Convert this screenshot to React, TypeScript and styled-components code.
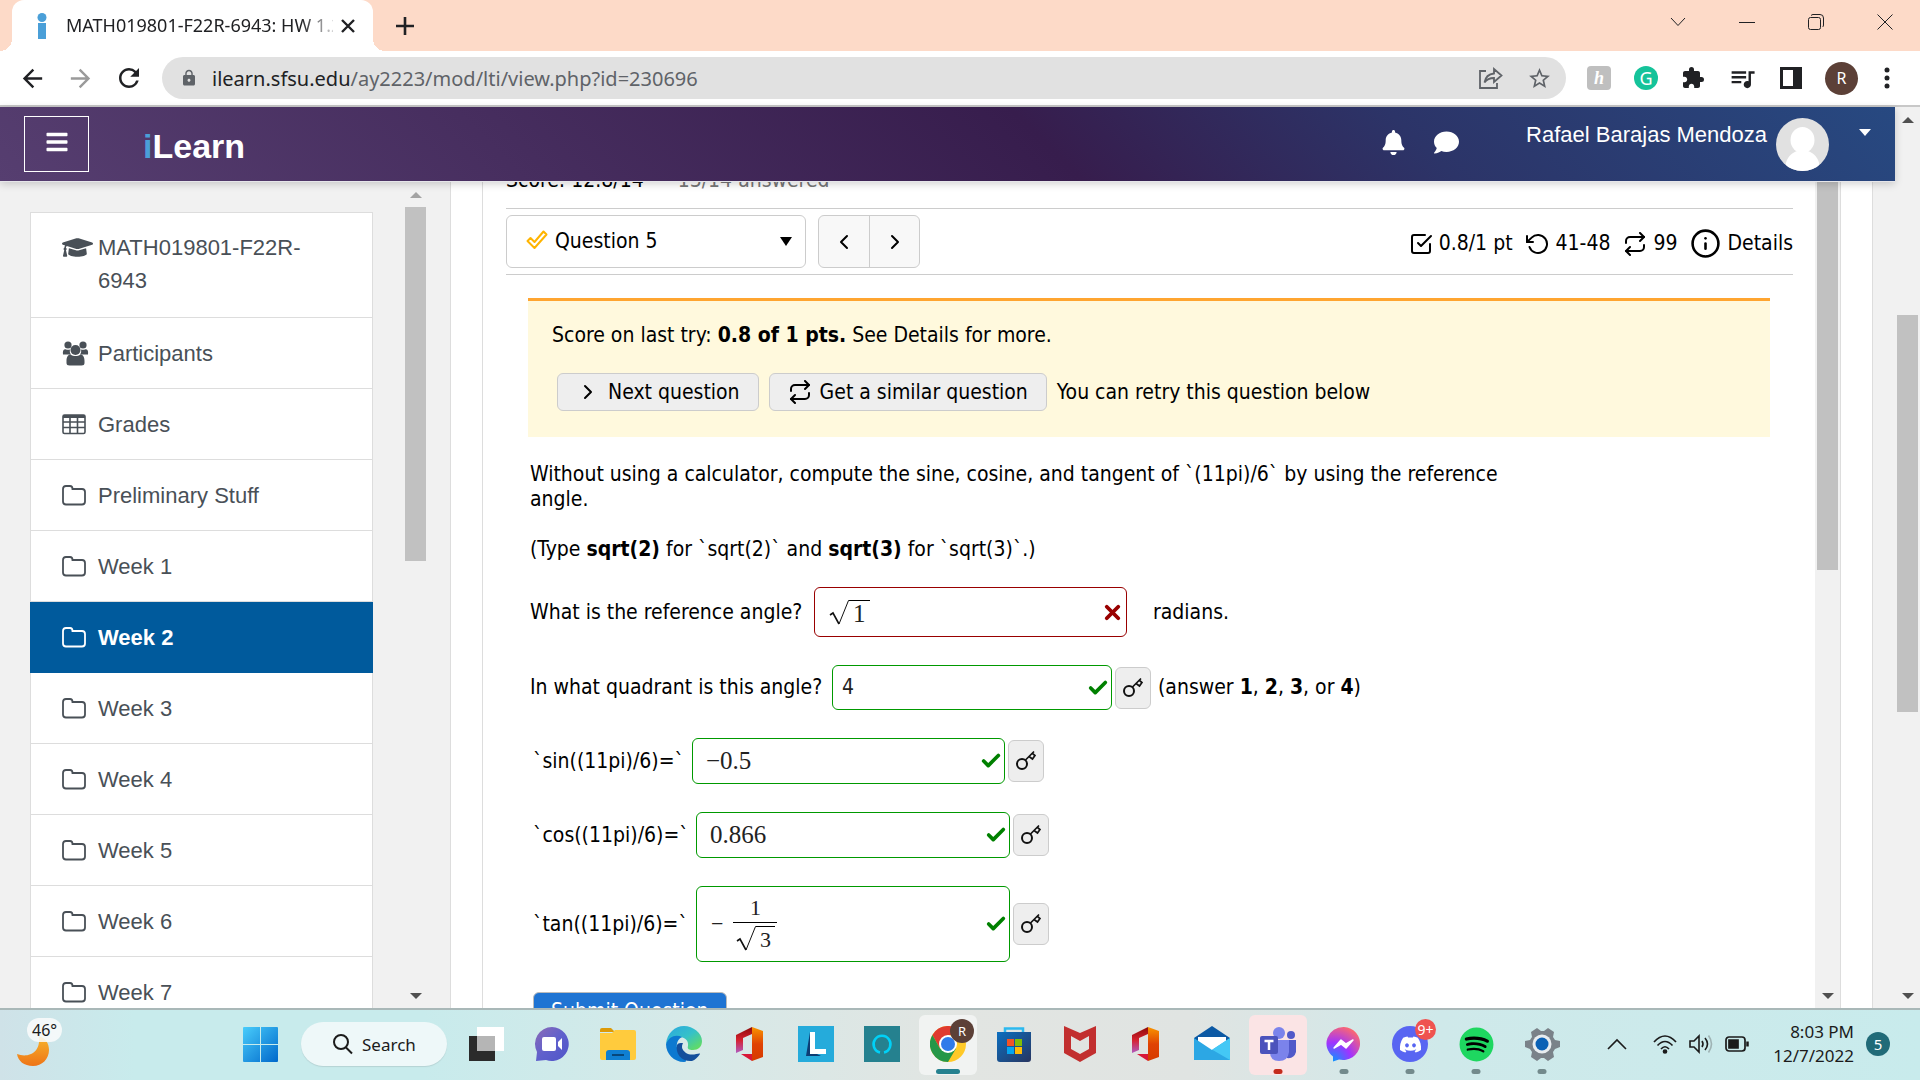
import React from "react";
import styled, { createGlobalStyle } from "styled-components";
import { FaBars, FaBell, FaComment, FaDiscord, FaGraduationCap, FaSpotify } from "react-icons/fa";
import { FiCheck, FiCheckSquare, FiChevronLeft, FiChevronRight, FiInfo, FiRepeat, FiRotateCcw, FiX } from "react-icons/fi";
import { MdArrowBack, MdArrowForward, MdExtension, MdLock, MdQueueMusic, MdRefresh, MdStarBorder } from "react-icons/md";

const ui = `"Noto Sans", "Open Sans", sans-serif`;
const course = `"DejaVu Sans Condensed", "Noto Sans", sans-serif`;
const arial = `"Liberation Sans", Arial, sans-serif`;
const serif = `"Liberation Serif", "Times New Roman", serif`;

const Global = createGlobalStyle`
  *, *::before, *::after { box-sizing: border-box; }
  body { margin: 0; background: #fff; color: #000; font: 20px/25px ${ui}; overflow: hidden; }
  button, input, select { font: inherit; color: inherit; margin: 0; }
  button { cursor: pointer; padding: 0; border: 0; background: none; }
  a { color: inherit; text-decoration: none; }
  svg { display: block; flex: none; }
  ul { list-style: none; margin: 0; padding: 0; }
  p { margin: 0; }
`;

const Screen = styled.div`
  display: flex;
  flex-direction: column;
  height: 100vh;
`;

/* ---------- browser chrome ---------- */

const TabStrip = styled.div`
  display: flex;
  align-items: center;
  height: 51px;
  padding: 0 27px 0 12px;
  background: #fddac8;
  color: #202124;
`;

const Tab = styled.div`
  position: relative;
  display: flex;
  align-items: center;
  align-self: stretch;
  width: 361px;
  padding: 0 18px 0 24px;
  background: #fff;
  border-radius: 12px 12px 0 0;
  font-size: 18px;
  &::before, &::after {
    content: "";
    position: absolute;
    bottom: 0;
    width: 12px;
    height: 12px;
  }
  &::before { left: -12px; background: radial-gradient(circle at 0 0, transparent 12px, #fff 12px); }
  &::after { right: -12px; background: radial-gradient(circle at 100% 0, transparent 12px, #fff 12px); }
`;

const TabTitle = styled.span`
  flex: 1;
  min-width: 0;
  margin: 0 8px 0 18px;
  overflow: hidden;
  white-space: nowrap;
  mask-image: linear-gradient(90deg, #000 88%, rgba(0, 0, 0, 0.2) 100%);
`;

const IconButton = styled.button<{ $dim?: boolean }>`
  display: flex;
  align-items: center;
  justify-content: center;
  color: ${(p) => (p.$dim ? "#9a9a9a" : "#202124")};
`;

const NewTab = styled(IconButton)`
  margin-left: 22px;
`;

const WindowControls = styled.div`
  display: flex;
  gap: 53px;
  margin: 0 0 8px auto;
`;

const Toolbar = styled.div`
  display: flex;
  align-items: center;
  height: 56px;
  padding: 0 30px 0 18px;
  border-bottom: 2px solid #c8c8c8;
`;

const NavButtons = styled.div`
  display: flex;
  gap: 19px;
  width: 144px;
`;

const AddressBar = styled.div`
  display: flex;
  align-items: center;
  flex: 1;
  height: 42px;
  padding: 0 14px 0 18px;
  border-radius: 21px;
  background: #e1e1e1;
  color: #5f6368;
`;

const Url = styled.span`
  flex: 1;
  margin-left: 14px;
  color: #5f6368;
  b { color: #202124; font-weight: 400; }
`;

const AddressActions = styled.div`
  display: flex;
  align-items: center;
  gap: 24px;
`;

const Extensions = styled.div`
  display: flex;
  align-items: center;
  gap: 23px;
  margin-left: 21px;
`;

const Profile = styled.button`
  margin: 0 3px 0 0;
`;

const Honey = styled.span`
  display: grid;
  place-items: center;
  width: 24px;
  height: 24px;
  border-radius: 4px;
  background: #bfbfbf;
  color: #fff;
  font: italic bold 18px/24px ${serif};
`;

const Round = styled.span<{ $size: number; $bg: string; $font: number }>`
  display: grid;
  place-items: center;
  width: ${(p) => p.$size}px;
  height: ${(p) => p.$size}px;
  border-radius: 50%;
  background: ${(p) => p.$bg};
  color: #fff;
  font-size: ${(p) => p.$font}px;
  line-height: 1;
`;

/* ---------- site frame ---------- */

const Viewport = styled.div`
  display: flex;
  flex: 1;
  min-height: 0;
`;

const Site = styled.div`
  display: flex;
  flex-direction: column;
  flex: 1;
  min-width: 0;
`;

const SiteHeader = styled.header`
  position: relative;
  z-index: 1;
  display: flex;
  align-items: center;
  height: 75px;
  flex: none;
  padding: 0 24px;
  border-bottom: 1px solid #e6e6ea;
  background: linear-gradient(45deg, #563e70 0%, #371d4d 55%, #2c3468 74%, #274981 100%);
  box-shadow: 0 2px 8px rgba(0, 0, 0, 0.18);
  color: #fff;
  font: 22px/33px ${arial};
`;

const MenuButton = styled.button`
  display: grid;
  place-items: center;
  width: 65px;
  height: 56px;
  padding-bottom: 4px;
  border: 1px solid #fff;
`;

const Logo = styled.a`
  margin: 3px 0 0 54px;
  font: bold 34px/40px "Liberation Sans Narrow", "Arial Narrow", ${arial};
  span { color: #4a9fd8; }
`;

const HeaderIcons = styled.div`
  display: flex;
  gap: 28px;
  align-items: center;
  margin: 0 67px 4px auto;
`;

const UserName = styled.a`
  padding-bottom: 20px;
  margin-right: 9px;
`;

const Triangle = styled.i<{ $up?: boolean; $color?: string }>`
  width: 0;
  height: 0;
  border: 6px solid transparent;
  border-${(p) => (p.$up ? "bottom" : "top")}-color: ${(p) => p.$color || "#505050"};
  border-${(p) => (p.$up ? "top" : "bottom")}-width: 0;
`;

const UserMenu = styled.button`
  margin: 0 0 24px 30px;
`;

const Track = styled.div`
  display: flex;
  flex-direction: column;
  flex: none;
  width: 25px;
  padding: 0 2px;
  background: #f1f1f1;
`;

const ArrowBox = styled.div`
  display: grid;
  place-items: center;
  height: 25px;
  flex: none;
`;

const Stretch = styled.div<{ $grow: number; $thumb?: boolean }>`
  flex: ${(p) => p.$grow} 0 0;
  background: ${(p) => (p.$thumb ? "#c1c1c1" : "transparent")};
`;

type ScrollbarProps = { before: number; thumb: number; after: number; noTop?: boolean; dimTop?: boolean };
const Scrollbar = ({ before, thumb, after, noTop, dimTop }: ScrollbarProps) => (
  <Track aria-hidden>
    {!noTop && <ArrowBox><Triangle $up $color={dimTop ? "#a3a3a3" : "#505050"} /></ArrowBox>}
    <Stretch $grow={before} />
    <Stretch $grow={thumb} $thumb />
    <Stretch $grow={after} />
    <ArrowBox><Triangle /></ArrowBox>
  </Track>
);

const Body = styled.div`
  display: flex;
  flex: 1;
  min-height: 0;
  overflow: hidden;
  background: #f1f1f1;
`;

/* ---------- course navigation ---------- */

const Sidebar = styled.nav`
  display: flex;
  flex: none;
  gap: 30px;
  width: 451px;
  padding: 0 22px 0 30px;
  border-right: 1px solid #ddd;
`;

const NavList = styled.ul`
  flex: 1;
  margin-top: 30px;
  border: 1px solid #ddd;
  border-bottom: 0;
  background: #fff;
  font: 22px/33px ${arial};
  color: #495057;
`;

const NavLink = styled.a<{ $active?: boolean }>`
  display: flex;
  margin: 0 -1px;
  padding: 19px 31px 18px;
  border: solid #ddd;
  border-width: 0 1px 1px;
  ${(p) => p.$active && `background: #005a9c; border-color: #005a9c; color: #fff; font-weight: bold;`}
  li:first-child > & { padding: 18px 31px 20px; }
`;

const NavIcon = styled.span`
  display: flex;
  align-items: center;
  width: 36px;
  height: 33px;
  flex: none;
`;

/* ---------- assignment ---------- */

const Page = styled.main`
  display: flex;
  flex: 1;
  min-width: 0;
  margin-right: 22px;
  padding: 0 31px;
  border-right: 1px solid #ddd;
  background: #fff;
  font: 21px/25px ${course};
`;

const Frame = styled.div`
  display: flex;
  flex: 1;
  min-width: 0;
  border: solid #ddd;
  border-width: 0 1px;
`;

const Assignment = styled.div`
  flex: 1;
  min-width: 0;
  padding: 0 22px 0 23px;
`;

const ScoreLine = styled.div`
  display: flex;
  gap: 34px;
  margin-top: -14px;
  padding-bottom: 15px;
  span { color: #777; }
`;

const QuestionBar = styled.div`
  display: flex;
  align-items: center;
  height: 67px;
  border: solid #ccc;
  border-width: 1px 0;
`;

const Picker = styled.label`
  position: relative;
  width: 300px;
  svg { position: absolute; left: 20px; top: 15px; }
  i { position: absolute; right: 14px; top: 22px; border-width: 9px 6px 0; }
`;

const PickerSelect = styled.select`
  display: block;
  width: 100%;
  height: 53px;
  padding: 0 40px 0 48px;
  border: 1px solid #ccc;
  border-radius: 6px;
  background: #fff;
  appearance: none;
`;

const Pager = styled.div`
  display: flex;
  margin-left: 12px;
  border: 1px solid #ccc;
  border-radius: 6px;
  background: #f8f8f8;
  button { display: grid; place-items: center; width: 50px; height: 51px; }
  button + button { border-left: 1px solid #ccc; }
`;

const Stats = styled.div`
  display: flex;
  align-items: center;
  gap: 13px;
  margin-left: auto;
  padding-top: 4px;
`;

const Stat = styled.span`
  display: flex;
  align-items: center;
  gap: 6px;
`;

const Notice = styled.section`
  margin: 23px 23px 0 22px;
  height: 139px;
  padding: 22px 24px;
  border-top: 3px solid #ffa530;
  background: #fff9dd;
`;

const NoticeActions = styled.div`
  display: flex;
  align-items: center;
  gap: 10px;
  margin: 25px 0 0 5px;
`;

const GreyButton = styled.button`
  display: flex;
  align-items: center;
  justify-content: center;
  gap: 8px;
  height: 38px;
  padding: 0 18px;
  border: 1px solid #ccc;
  border-radius: 6px;
  background: #eee;
`;

const KeyButton = styled(GreyButton)`
  width: 36px;
  height: 42px;
  margin-left: 3px;
  padding: 0;
`;

const Question = styled.form`
  max-width: 1130px;
  padding: 25px 24px 0;
`;

const Paragraph = styled.p`
  max-width: 1020px;
  margin-bottom: 25px;
`;

const Row = styled.div<{ $gap: number }>`
  display: flex;
  align-items: center;
  margin-bottom: ${(p) => p.$gap}px;
`;

const Label = styled.label<{ $width: number }>`
  width: ${(p) => p.$width}px;
  flex: none;
  padding-left: ${(p) => (p.$width < 200 ? 3 : 0)}px;
  white-space: nowrap;
`;

const Field = styled.div<{ $width: number; $height: number; $wrong?: boolean }>`
  display: flex;
  align-items: center;
  width: ${(p) => p.$width}px;
  height: ${(p) => p.$height}px;
  padding: 0 2px 0 9px;
  border: 1px solid ${(p) => (p.$wrong ? "#990000" : "#009900")};
  border-radius: 6px;
  color: ${(p) => (p.$wrong ? "#990000" : "#008000")};
`;

const FieldInput = styled.input<{ $math?: boolean }>`
  flex: 1;
  min-width: 0;
  padding: 0 0 0 ${(p) => (p.$math ? 4 : 0)}px;
  border: 0;
  outline: 0;
  background: none;
  color: #222;
  font: ${(p) => (p.$math ? `25px/30px ${serif}` : `21px/25px ${course}`)};
`;

const MathBox = styled.div<{ $size: number }>`
  display: flex;
  align-items: center;
  flex: 1;
  padding-left: 5px;
  outline: 0;
  color: #222;
  font: ${(p) => p.$size}px/22px ${serif};
`;

const Fraction = styled.span`
  display: flex;
  flex-direction: column;
  align-items: center;
  margin-left: 10px;
`;

const Numerator = styled.span`
  width: 44px;
  padding-bottom: 3px;
  border-bottom: 1px solid #000;
  text-align: center;
`;

const Denominator = styled.span`
  padding-top: 3px;
`;

const Root = styled.span`
  display: flex;
`;

const Radicand = styled.span`
  padding: 2px 4px 0;
  border-top: 1px solid #000;
`;

const After = styled.span<{ $far?: boolean }>`
  margin-left: ${(p) => (p.$far ? 26 : 7)}px;
`;

const Submit = styled.button`
  display: block;
  height: 38px;
  margin: 30px 0 0 3px;
  padding: 0 17px;
  border: 1px solid #bbb;
  border-radius: 6px;
  background: #1f74d3;
  color: #fff;
`;

const SqrtSign = () => (
  <svg width="20" height="25" viewBox="0 0 20 25" fill="none" stroke="#111">
    <path d="M1 15l3-2 6 11" strokeWidth="1.6" />
    <path d="M10 24L19.500 .5H20" strokeWidth="1" />
  </svg>
);

const KeyIcon = () => (
  <svg width="20" height="22" viewBox="0 0 20 22" fill="none" stroke="#111" strokeWidth="2">
    <circle cx="6" cy="14" r="5" />
    <path d="M9.500 10L18 1.500M13 6.500l3.500 2.500 2.500-3.500-2.500-2" strokeWidth="1.7" />
  </svg>
);

const OutlineCheck = () => (
  <svg width="22" height="20" viewBox="0 0 22 20" fill="none" stroke="#ffb400" strokeWidth="2" strokeLinejoin="round">
    <path d="M1.500 11l3-3 4 4L17.500 1.500l3 3L8.500 18z" />
  </svg>
);

const FolderIcon = () => (
  <svg width="24" height="21" viewBox="0 0 24 21" fill="none" stroke="currentColor" strokeWidth="1.800">
    <path d="M1 4q0-3 3-3h4q2.500 0 2.500 3H20q3 0 3 3v9.500q0 3-3 3H4q-3 0-3-3z" />
  </svg>
);

const TableIcon = () => (
  <svg width="24" height="21" viewBox="0 0 24 21" fill="none" stroke="currentColor" strokeWidth="1.600">
    <rect x="1" y="1" width="22" height="18.500" rx="1.500" />
    <path d="M1 2.500h22" strokeWidth="3" />
    <path d="M1 8h22M1 13.500h22M8 2v17M15.500 2v17" />
  </svg>
);

const GroupIcon = () => (
  <svg width="27" height="25" viewBox="0 0 27 25" fill="currentColor">
    <circle cx="6" cy="4" r="3.600" /><circle cx="21" cy="4" r="3.600" />
    <path d="M1 13.500C.5 10 1.500 7.500 4 8.500c1.500.5 3 .3 4 0-.5 2 0 4 1 5z" />
    <path d="M26 13.500c.5-3.500-.5-6-3-5-1.500.5-3 .3-4 0 .5 2 0 4-1 5z" />
    <circle cx="13.500" cy="9" r="5" />
    <path d="M4.500 20c0-4 1.500-6.500 4-6.500 3 2 7 2 10 0 2.500 0 4 2.500 4 6.500v2q0 2.500-3 2.500h-12q-3 0-3-2.500z" />
  </svg>
);

type AnswerProps = {
  id: string;
  label: string;
  labelWidth: number;
  width: number;
  height: number;
  gap: number;
  wrong?: boolean;
  value?: string;
  math?: boolean;
  children?: React.ReactNode;
  after?: React.ReactNode;
};

const Answer = ({ id, label, labelWidth, width, height, gap, wrong, value, math, children, after }: AnswerProps) => (
  <Row $gap={gap}>
    <Label $width={labelWidth} htmlFor={id} id={`${id}-label`}>{label}</Label>
    <Field $width={width} $height={height} $wrong={wrong}>
      {children ?? <FieldInput id={id} $math={math} defaultValue={value} />}
      {wrong ? <FiX size={23} strokeWidth={4} /> : <FiCheck size={22} strokeWidth={4} />}
    </Field>
    {!wrong && <KeyButton type="button" aria-label="Show answer"><KeyIcon /></KeyButton>}
    {after && <After $far={wrong}>{after}</After>}
  </Row>
);

/* ---------- taskbar ---------- */

const Taskbar = styled.footer`
  display: flex;
  align-items: center;
  flex: none;
  height: 72px;
  border-top: 2px solid #a9b8b8;
  background: linear-gradient(90deg, #cfe2e8 0%, #c8ebec 7%, #c8ebec 22%, #d6e9e8 36%, #e2e5e2 50%, #e0e4e2 62%, #cfe9ea 75%, #c8ebec 100%);
  color: #1b1b1b;
  font-size: 17px;
`;

const Weather = styled.button`
  position: relative;
  width: 66px;
  height: 56px;
  margin-right: 161px;
  svg { position: absolute; left: 16px; top: 19px; }
  span {
    position: absolute;
    left: 27px;
    top: 1px;
    padding: 0 5px;
    border-radius: 12px;
    background: rgba(250, 252, 252, 0.85);
    font-size: 16px;
    line-height: 24px;
  }
`;

const AppCell = styled.button<{ $tile?: string; $mark?: string }>`
  position: relative;
  display: grid;
  place-items: center;
  width: 58px;
  height: 60px;
  margin: 0 4px;
  padding-bottom: 2px;
  border-radius: 6px;
  background: ${(p) => p.$tile || "transparent"};
  &::after {
    content: "";
    position: absolute;
    bottom: 1px;
    left: 50%;
    width: ${(p) => (p.$mark === "#25818f" ? 24 : 9)}px;
    height: 5px;
    border-radius: 3px;
    transform: translateX(-50%);
    background: ${(p) => p.$mark || "transparent"};
  }
`;

const CornerBadge = styled.span`
  position: absolute;
  top: 4px;
  right: 3px;
`;

const SearchPill = styled.button`
  display: flex;
  align-items: center;
  gap: 8px;
  width: 146px;
  height: 44px;
  margin: 0 6px 2px 8px;
  padding-left: 31px;
  border-radius: 22px;
  background: #eef8f9;
  box-shadow: 0 1px 1px #b5d3d4;
`;

const Tray = styled.div`
  display: flex;
  align-items: center;
  gap: 12px;
  margin: 0 30px 2px auto;
`;

const Clock = styled.time`
  margin-left: 12px;
  text-align: right;
  line-height: 24px;
`;

const Chevron = styled.span`
  margin-right: 14px;
`;

const Office = () => (
  <svg width="30" height="36" viewBox="0 0 30 36">
    <defs>
      <linearGradient id="offL" x1="0" y1="0" x2="0" y2="1"><stop offset="0" stopColor="#8d0b0b" /><stop offset=".5" stopColor="#d6212f" /><stop offset="1" stopColor="#b05bc0" /></linearGradient>
      <linearGradient id="offR" x1="0" y1="0" x2="0" y2="1"><stop offset="0" stopColor="#f99500" /><stop offset=".5" stopColor="#e04304" /><stop offset="1" stopColor="#d63a00" /></linearGradient>
    </defs>
    <path d="M1 9L17 1v7l-9 4v12l-7 3z" fill="url(#offL)" />
    <path d="M6 28h11v7z" fill="#d81838" />
    <path d="M17 1l11 4v26l-11 4z" fill="url(#offR)" />
  </svg>
);

const apps: { name: string; tile?: string; mark?: string; icon: React.ReactNode }[] = [
  { name: "Task view", icon: <svg width="36" height="36"><path d="M1 10h26v25H1z" fill="#2b2b2b" /><path d="M9 1h27v24H9z" fill="#fff" /><path d="M9 10h18v15H9z" fill="#b5b5b5" /></svg> },
  { name: "Chat", icon: <svg width="36" height="36"><defs><linearGradient id="chat" x1="0" y1="0" x2="1" y2="1"><stop offset="0" stopColor="#8d6bb5" /><stop offset=".5" stopColor="#6060cc" /><stop offset="1" stopColor="#4f55c9" /></linearGradient></defs><path d="M18 1a17 17 0 1 1-6 33l-10 1 1-9A17 17 0 0 1 18 1z" fill="url(#chat)" /><rect x="8" y="11" width="14" height="14" rx="2" fill="#fff" /><path d="M24 16l4-4v12l-4-4z" fill="#fff" /></svg> },
  { name: "File Explorer", icon: <svg width="36" height="36"><path d="M0 4q0-2 2-2h9l4 4H0z" fill="#dd9a07" /><path d="M0 7h12l3-3h19q2 0 2 2v26q0 2-2 2H2q-2 0-2-2z" fill="#ffcb3d" /><path d="M6 34v-7q0-3 3-3h18q3 0 3 3v7z" fill="#0f7fd2" /><path d="M12 29h12" stroke="#07477b" strokeWidth="2" /></svg> },
  { name: "Edge", icon: <svg width="36" height="36"><defs><linearGradient id="edgeT" x1="0" y1="0" x2="1" y2="1"><stop offset="0" stopColor="#2aa7e0" /><stop offset=".5" stopColor="#35c1c9" /><stop offset="1" stopColor="#6be24c" /></linearGradient></defs><path d="M0 18C1 7 9 0 18 0s18 7 18 15c0 6-4 9-9 9-4 0-6-1-5-4 1-6-4-9-9-9S3 13 0 18z" fill="url(#edgeT)" /><path d="M0 18C3 10 10 8 16 11c-6 3-7 11-2 16 4 4 9 9 4 9C8 36 0 28 0 18z" fill="#0d79d0" /><path d="M11 19c-2 9 5 17 15 16 3-1 6-4 8-7 0-2-8 3-14-1-4-3-5-6-3-10-3 0-5 0-6 2z" fill="#134f9c" /></svg> },
  { name: "Office", icon: <Office /> },
  { name: "LockDown Browser", icon: <svg width="36" height="36"><path d="M0 0h36v36H0z" fill="#25abdb" /><path d="M12 6L8 30h15l-10-5z" fill="#0d3d74" /><path d="M12 6h5v17h11v5H12z" fill="#fff" /></svg> },
  { name: "Alexa", icon: <svg width="36" height="36"><path d="M0 0h36v36H0z" fill="#25818f" /><path d="M16 26.500a8.500 8.500 0 1 1 4 0" fill="none" stroke="#00d1f7" strokeWidth="2.500" /></svg> },
  { name: "Chrome", tile: "#f1f3f2", mark: "#25818f", icon: <><svg width="36" height="36" viewBox="0 0 36 36"><circle cx="18" cy="18" r="18" fill="#ffc928" /><path d="M2.400 9A18 18 0 0 1 33.600 9H18l-8 13.500z" fill="#e03a2f" /><path d="M2.400 9A18 18 0 0 0 18 36l8-13.500H10z" fill="#259748" /><circle cx="18" cy="18" r="9" fill="#fff" /><circle cx="18" cy="18" r="7" fill="#2f7bea" /></svg><CornerBadge><Round $size={24} $bg="#5c4037" $font={13}>R</Round></CornerBadge></> },
  { name: "Microsoft Store", icon: <svg width="36" height="36"><defs><linearGradient id="store" x1="0" y1="0" x2="1" y2="1"><stop offset="0" stopColor="#0b6fc0" /><stop offset="1" stopColor="#283560" /></linearGradient></defs><path d="M9 8V2.500h18V8" fill="none" stroke="#2cb9ef" strokeWidth="2.500" /><path d="M1 6h34v27q0 3-3 3H4q-3 0-3-3z" fill="url(#store)" /><path d="M11 13h7v7h-7z" fill="#f35325" /><path d="M19 13h7v7h-7z" fill="#81bc06" /><path d="M11 21h7v7h-7z" fill="#05a6f0" /><path d="M19 21h7v7h-7z" fill="#ffba08" /></svg> },
  { name: "McAfee", icon: <svg width="36" height="36"><path d="M2 0l16 7 16-7v27l-16 9-16-9zM9 10v13l9 5 9-5V10l-9 5z" fill="#c22f2f" fillRule="evenodd" /></svg> },
  { name: "Microsoft 365", icon: <Office /> },
  { name: "Mail", icon: <svg width="36" height="36"><path d="M0 12L18 0l18 12v6H0z" fill="#0c59a4" /><path d="M4 11h28v10L18 28 4 21z" fill="#fff" /><path d="M0 12l18 12L36 12v22H0z" fill="#2ca7e4" /><path d="M36 12v22L13 20.700l5 3z" fill="#44c8f5" /></svg> },
  { name: "Teams", tile: "#fbe4e5", mark: "#c42b1c", icon: <svg width="38" height="36"><circle cx="20" cy="7" r="6" fill="#7b83eb" /><circle cx="32" cy="9" r="4" fill="#5059c9" /><path d="M28 14h9v12q-2 7-9 6z" fill="#5059c9" /><path d="M11 14h19v12q-1 9-10 9t-9-9z" fill="#7b83eb" /><rect x="1" y="10" width="18" height="18" rx="2" fill="#4b53bc" /><path d="M5.500 15h9M10 15v9" stroke="#fff" strokeWidth="2.500" /></svg> },
  { name: "Messenger", mark: "#738a8c", icon: <svg width="36" height="36" viewBox="0 0 36 36"><defs><radialGradient id="msgr" cx=".2" cy="1" r="1.100"><stop offset="0" stopColor="#0a95ff" /><stop offset=".5" stopColor="#a033ff" /><stop offset="1" stopColor="#ff6a6a" /></radialGradient></defs><path d="M18 1a17 16.500 0 1 1-5 32.500l-6 2v-5A17 16.500 0 0 1 18 1z" fill="url(#msgr)" /><path d="M8 22l7-8 5 4 7-4-7 8-5-4z" fill="#fff" stroke="#fff" strokeWidth="1.500" strokeLinejoin="round" /></svg> },
  { name: "Discord", mark: "#738a8c", icon: <><Round $size={36} $bg="#5865f2" $font={23}><FaDiscord /></Round><CornerBadge><Round $size={21} $bg="#ef5350" $font={14}>9+</Round></CornerBadge></> },
  { name: "Spotify", mark: "#738a8c", icon: <svg width="35" height="35" viewBox="0 0 35 35"><circle cx="17.500" cy="17.500" r="15" fill="#000" /><FaSpotify size={35} color="#1ed760" /></svg> },
  { name: "Settings", mark: "#738a8c", icon: <svg width="36" height="36" viewBox="0 0 36 36"><path d="M13 2l4 3h3l4-3 6 4-1 5 2 3 5 1v6l-5 2-2 3 1 5-6 4-4-3h-3l-4 3-6-4 1-5-2-3-5-2v-6l5-1 2-3-1-5z" fill="#7a8289" /><circle cx="18" cy="18" r="9.500" fill="#e8edf0" /><circle cx="18" cy="18" r="6.500" fill="#0b61b5" /></svg> },
];

const weeks = ["Preliminary Stuff", "Week 1", "Week 2", "Week 3", "Week 4", "Week 5", "Week 6", "Week 7"];

export default function App() {
  return (
    <Screen>
      <Global />
      <TabStrip>
        <Tab>
          <svg width="12" height="26" viewBox="0 0 12 26" fill="#4a9fd8"><circle cx="6" cy="4.500" r="4.500" /><path d="M2 10h8v16H2z" /></svg>
          <TabTitle>MATH019801-F22R-6943: HW 1.2</TabTitle>
          <IconButton aria-label="Close tab"><svg width="14" height="14" stroke="currentColor" strokeWidth="2.400"><path d="M1 1l12 12M13 1L1 13" /></svg></IconButton>
        </Tab>
        <NewTab aria-label="New tab"><svg width="20" height="20" stroke="currentColor" strokeWidth="2.600"><path d="M10 1v18M1 10h18" /></svg></NewTab>
        <WindowControls>
          <IconButton aria-label="Tab list"><svg width="16" height="16" fill="none" stroke="currentColor"><path d="M1 4l7 7.500L15 4" /></svg></IconButton>
          <IconButton aria-label="Minimize"><svg width="16" height="16" fill="none" stroke="currentColor"><path d="M0 8.500h16" /></svg></IconButton>
          <IconButton aria-label="Restore"><svg width="16" height="16" fill="none" stroke="currentColor"><rect x=".5" y="3.500" width="12" height="12" rx="2" /><path d="M3 1.500q1-1 2-1h7q3.500 0 3.500 3.500v7q0 1.500-1 2" /></svg></IconButton>
          <IconButton aria-label="Close window"><svg width="16" height="16" fill="none" stroke="currentColor"><path d="M.5.5l15 15M15.500.5l-15 15" /></svg></IconButton>
        </WindowControls>
      </TabStrip>
      <Toolbar>
        <NavButtons>
          <IconButton aria-label="Back"><MdArrowBack size={29} /></IconButton>
          <IconButton aria-label="Forward" $dim><MdArrowForward size={29} /></IconButton>
          <IconButton aria-label="Reload"><MdRefresh size={30} /></IconButton>
        </NavButtons>
        <AddressBar>
          <MdLock size={18} />
          <Url><b>ilearn.sfsu.edu</b>/ay2223/mod/lti/view.php?id=230696</Url>
          <AddressActions>
            <IconButton aria-label="Share"><svg width="24" height="22" fill="none" stroke="#5f6368" strokeWidth="1.800"><path d="M7 4H1v17h17v-5M5.500 15.500c1-6 4-8.500 9.500-9V2l7.500 6.500L15 15v-4c-4 0-7 1-9.500 4.500z" /></svg></IconButton>
            <IconButton aria-label="Bookmark"><MdStarBorder size={25} color="#5f6368" /></IconButton>
          </AddressActions>
        </AddressBar>
        <Extensions>
          <Honey>h</Honey>
          <Round $size={24} $bg="#15c39a" $font={18}>G</Round>
          <MdExtension size={24} color="#202124" />
          <MdQueueMusic size={29} color="#202124" />
          <svg width="22" height="22"><path d="M1.500 1.500h19v19h-19z" fill="none" stroke="#202124" strokeWidth="3" /><path d="M13 1h8v20h-8z" fill="#202124" /></svg>
          <Profile aria-label="Profile"><Round $size={33} $bg="#5c4037" $font={16}>R</Round></Profile>
          <IconButton aria-label="Chrome menu"><svg width="6" height="22" fill="#202124"><circle cx="3" cy="3" r="2.500" /><circle cx="3" cy="11" r="2.500" /><circle cx="3" cy="19" r="2.500" /></svg></IconButton>
        </Extensions>
      </Toolbar>

      <Viewport>
        <Site>
          <SiteHeader>
            <MenuButton aria-label="Toggle navigation"><FaBars size={24} /></MenuButton>
            <Logo href="#"><span>i</span>Learn</Logo>
            <HeaderIcons>
              <IconButton aria-label="Notifications"><FaBell size={25} color="#fff" /></IconButton>
              <IconButton aria-label="Messages"><FaComment size={25} color="#fff" /></IconButton>
            </HeaderIcons>
            <UserName href="#">Rafael Barajas Mendoza</UserName>
            <svg width="53" height="53" viewBox="0 0 53 53"><defs><clipPath id="face"><circle cx="26.500" cy="26.500" r="26.500" /></clipPath></defs><g clipPath="url(#face)"><path d="M0 0h53v53H0z" fill="#e1e1e1" /><ellipse cx="26.500" cy="22" rx="12" ry="13" fill="#fff" /><path d="M9 53c0-14 7-18 12-20h11c5 2 12 6 12 20z" fill="#fff" /></g></svg>
            <UserMenu aria-label="User menu"><svg width="12" height="7" fill="#fff"><path d="M0 0h12L6 7z" /></svg></UserMenu>
          </SiteHeader>
          <Body>
            <Sidebar>
              <NavList>
                <li><NavLink href="#"><NavIcon><FaGraduationCap size={31} /></NavIcon>MATH019801-F22R-6943</NavLink></li>
                <li><NavLink href="#"><NavIcon><GroupIcon /></NavIcon>Participants</NavLink></li>
                <li><NavLink href="#"><NavIcon><TableIcon /></NavIcon>Grades</NavLink></li>
                {weeks.map((w) => (
                  <li key={w}><NavLink href="#" $active={w === "Week 2"}><NavIcon><FolderIcon /></NavIcon>{w}</NavLink></li>
                ))}
              </NavList>
              <Scrollbar before={0} thumb={354} after={422} dimTop />
            </Sidebar>
            <Page>
              <Frame>
                <Assignment>
                  <ScoreLine>Score: 12.8/14 <span>13/14 answered</span></ScoreLine>
                  <QuestionBar>
                    <Picker>
                      <PickerSelect aria-label="Question" defaultValue="5"><option value="5">Question 5</option></PickerSelect>
                      <OutlineCheck />
                      <Triangle $color="#000" />
                    </Picker>
                    <Pager>
                      <button aria-label="Previous question"><FiChevronLeft size={24} /></button>
                      <button aria-label="Next question"><FiChevronRight size={24} /></button>
                    </Pager>
                    <Stats>
                      <Stat><FiCheckSquare size={24} />0.8/1 pt</Stat>
                      <Stat><FiRotateCcw size={24} />41-48</Stat>
                      <Stat><FiRepeat size={24} />99</Stat>
                      <Stat><FiInfo size={31} /><a href="#">Details</a></Stat>
                    </Stats>
                  </QuestionBar>
                  <Notice>
                    <p>Score on last try: <b>0.8 of 1 pts.</b> See Details for more.</p>
                    <NoticeActions>
                      <GreyButton><FiChevronRight size={24} />Next question</GreyButton>
                      <GreyButton><FiRepeat size={24} />Get a similar question</GreyButton>
                      <span>You can retry this question below</span>
                    </NoticeActions>
                  </Notice>
                  <Question>
                    <Paragraph>Without using a calculator, compute the sine, cosine, and tangent of `(11pi)/6` by using the reference angle.</Paragraph>
                    <Paragraph>(Type <b>sqrt(2)</b> for `sqrt(2)` and <b>sqrt(3)</b> for `sqrt(3)`.)</Paragraph>
                    <Answer id="ref" label="What is the reference angle?" labelWidth={284} width={313} height={50} gap={28} wrong after="radians.">
                      <MathBox $size={25} role="textbox" tabIndex={0} aria-labelledby="ref-label" id="ref"><Root><SqrtSign /><Radicand>1</Radicand></Root></MathBox>
                    </Answer>
                    <Answer id="quad" label="In what quadrant is this angle?" labelWidth={302} width={280} height={45} gap={28} value="4" after={<>(answer <b>1</b>, <b>2</b>, <b>3</b>, or <b>4</b>)</>} />
                    <Answer id="sin" label="`sin((11pi)/6)=`" labelWidth={162} width={313} height={46} gap={28} value="−0.5" math />
                    <Answer id="cos" label="`cos((11pi)/6)=`" labelWidth={166} width={314} height={46} gap={28} value="0.866" math />
                    <Answer id="tan" label="`tan((11pi)/6)=`" labelWidth={166} width={314} height={76} gap={30}>
                      <MathBox $size={22} role="textbox" tabIndex={0} aria-labelledby="tan-label" id="tan">−<Fraction><Numerator>1</Numerator><Denominator><Root><SqrtSign /><Radicand>3</Radicand></Root></Denominator></Fraction></MathBox>
                    </Answer>
                    <Submit type="button">Submit Question</Submit>
                  </Question>
                </Assignment>
                <Scrollbar noTop before={0} thumb={388} after={413} />
              </Frame>
            </Page>
          </Body>
        </Site>
        <Scrollbar before={183} thumb={397} after={271} />
      </Viewport>

      <Taskbar>
        <Weather aria-label="Weather">
          <svg width="34" height="32"><defs><linearGradient id="moon" x1="0" y1="0" x2="0" y2="1"><stop offset="0" stopColor="#f7b52c" /><stop offset="1" stopColor="#ee7417" /></linearGradient></defs><path d="M23 0c7 2 10 8 10 14 0 9-7 16-16 16C8 30 2 25 1 18c10 4 24 0 22-18z" fill="url(#moon)" /></svg>
          <span>46°</span>
        </Weather>
        <AppCell aria-label="Start"><svg width="35" height="35"><defs><linearGradient id="win" x1="0" y1="0" x2="1" y2="1"><stop offset="0" stopColor="#49cdfb" /><stop offset="1" stopColor="#0068cb" /></linearGradient></defs><path d="M0 1q0-1 1-1h16v17H0zM18 0h16q1 0 1 1v16H18zM0 18h17v17H1q-1 0-1-1zM18 18h17v16q0 1-1 1H18z" fill="url(#win)" /></svg></AppCell>
        <SearchPill><svg width="22" height="22" fill="none" stroke="currentColor" strokeWidth="2"><circle cx="9" cy="9" r="7" /><path d="M14 14.500l6 6" /></svg>Search</SearchPill>
        {apps.map((a) => (
          <AppCell key={a.name} aria-label={a.name} $tile={a.tile} $mark={a.mark}>{a.icon}</AppCell>
        ))}
        <Tray>
          <Chevron><svg width="20" height="12" fill="none" stroke="currentColor" strokeWidth="1.600"><path d="M1 11l9-9 9 9" /></svg></Chevron>
          <svg width="24" height="20" fill="none" stroke="currentColor" strokeWidth="1.700"><path d="M1 8q11-12 22 0M4.500 11.500q7.500-8 15 0M8 15q4-4.500 8 0" /><circle cx="12" cy="17.500" r="1.500" fill="currentColor" /></svg>
          <svg width="24" height="20" fill="none" stroke="currentColor" strokeWidth="1.600"><path d="M1 7h4l5-5v16l-5-5H1zM13 7q2 3 0 6M16 4q5 6 0 12" /><path d="M19.500 1.500q6 8.500 0 17" stroke="#9fb3b4" /></svg>
          <svg width="24" height="16" fill="none" stroke="currentColor" strokeWidth="1.700"><rect x="1" y="1" width="19" height="14" rx="3" /><path d="M4 4h9v8H4z" fill="currentColor" /><path d="M22.500 5.500v5" strokeWidth="2.500" /></svg>
          <Clock>8:03 PM<br />12/7/2022</Clock>
          <Round $size={24} $bg="#216b78" $font={15}>5</Round>
        </Tray>
      </Taskbar>
    </Screen>
  );
}
